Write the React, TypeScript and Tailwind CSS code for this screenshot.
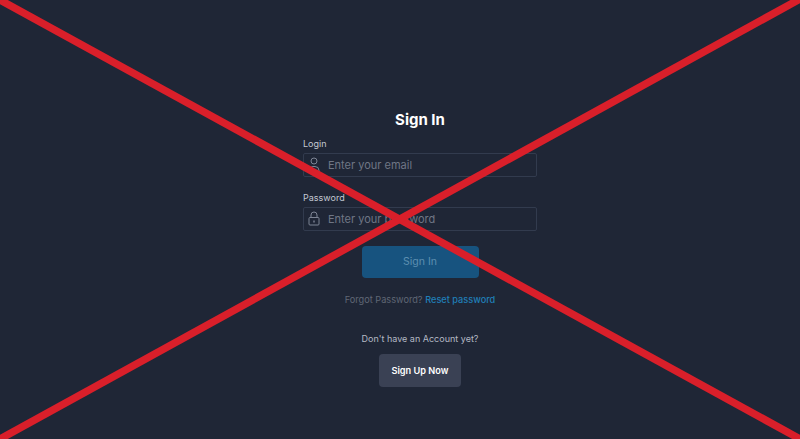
function UserIcon() {
  return (
    <svg width="12" height="17" viewBox="0 0 12 17" fill="none" stroke="currentColor" strokeWidth="1" className="mt-[1px]">
      <circle cx="6" cy="4" r="3" />
      <path d="M1 16v-2.5a4 4 0 0 1 4-4h2a4 4 0 0 1 4 4V16z" />
    </svg>
  );
}

function LockIcon() {
  return (
    <svg width="12" height="15" viewBox="0 0 12 15" fill="none" stroke="currentColor" strokeWidth="1" className="mb-[1px]">
      <rect x="1" y="6.5" width="10" height="7.5" rx="1" />
      <path d="M3 6.5V4a3 3 0 0 1 6 0v2.5" />
      <path d="M6 9.5v2" strokeWidth="1.4" />
    </svg>
  );
}

function Field({ label, placeholder, icon }: { label: string; placeholder: string; icon: React.ReactNode }) {
  return (
    <div className="flex flex-col">
      <label className="text-[9px] leading-[14px] text-[#c3c8d2] h-[14px]">{label}</label>
      <div className="mt-[2px] h-[24px] flex items-center border border-[#323b4e] rounded-[2px]">
        <span className="w-[24px] pl-[4px] flex text-[#7d8494]">{icon}</span>
        <span className="text-[11px] text-[#6f7685]">{placeholder}</span>
      </div>
    </div>
  );
}

export default function App() {
  return (
    <div className="relative w-[800px] h-[439px] overflow-hidden bg-[#1f2636] font-['Inter','Liberation_Sans',sans-serif]">
      <div className="flex flex-col items-center pt-[110px] pl-[40px]">
        <h1 className="text-[15px] leading-[20px] font-bold text-white">Sign In</h1>
        <div className="w-[234px] mt-[7px] flex flex-col gap-[14px]">
          <Field label="Login" placeholder="Enter your email" icon={<UserIcon />} />
          <Field label="Password" placeholder="Enter your password" icon={<LockIcon />} />
        </div>
        <button className="mt-[15px] w-[117px] h-[32px] rounded-[4px] bg-[#17537f] text-[10.5px] text-[#5d8fb0]">Sign In</button>
        <p className="mt-[15px] text-[9.2px] leading-[14px] text-[#5f6675]">
          Forgot Password? <span className="text-[#1f7fb8] font-medium">Reset password</span>
        </p>
        <p className="mt-[25px] text-[9px] leading-[14px] text-[#b4b9c4]">Don't have an Account yet?</p>
        <button className="mt-[8px] w-[82px] h-[33px] rounded-[4px] bg-[#3a4154] text-[9.2px] font-semibold text-white">Sign Up Now</button>
      </div>
      <svg className="absolute inset-0 pointer-events-none" width="800" height="439" viewBox="0 0 800 439">
        <line x1="0" y1="0" x2="800" y2="439" stroke="#d91f2a" strokeWidth="7.5" />
        <line x1="800" y1="-1" x2="0" y2="439" stroke="#d91f2a" strokeWidth="7.5" />
      </svg>
    </div>
  );
}
